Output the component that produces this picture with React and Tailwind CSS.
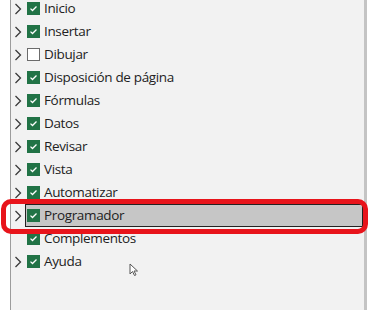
import React from "react";

const items = [
  { label: "Inicio", checked: true, chev: true },
  { label: "Insertar", checked: true, chev: true },
  { label: "Dibujar", checked: false, chev: true },
  { label: "Disposición de página", checked: true, chev: true },
  { label: "Fórmulas", checked: true, chev: true },
  { label: "Datos", checked: true, chev: true },
  { label: "Revisar", checked: true, chev: true },
  { label: "Vista", checked: true, chev: true },
  { label: "Automatizar", checked: true, chev: true },
  { label: "Programador", checked: true, chev: true, sel: true },
  { label: "Complementos", checked: true, chev: false },
  { label: "Ayuda", checked: true, chev: true },
];

function Chevron() {
  return (
    <svg width="8" height="12" viewBox="0 0 8 12" className="shrink-0">
      <path d="M1.5 1 L6.5 6 L1.5 11" fill="none" stroke="#3a3a3a" strokeWidth="1.3" />
    </svg>
  );
}

function Box({ checked }) {
  if (!checked)
    return <div className="w-[13px] h-[13px] bg-white border border-[#6b6b6b] shrink-0" />;
  return (
    <div className="w-[13px] h-[13px] bg-[#217346] shrink-0 flex items-center justify-center">
      <svg width="9" height="7" viewBox="0 0 9 7">
        <path d="M1.5 3.6 L3.5 5.5 L7.5 1.5" fill="none" stroke="white" strokeWidth="1.3" />
      </svg>
    </div>
  );
}

export default function App() {
  return (
    <div
      className="relative w-[371px] h-[313px] bg-white overflow-hidden"
      style={{ fontFamily: '"Open Sans", "Noto Sans", sans-serif' }}
    >
      <div className="ml-[10px] w-[357px] h-full bg-[#f2f2f2] border-l border-[#9c9c9c] border-r-[3px] border-r-[#c4c4c4]">
        <div className="mt-[-3px] flex flex-col">
          {items.map((it) => (
            <div key={it.label} className="h-[23px] flex items-center">
              <div className="w-[14px] pl-[3px] flex items-center">{it.chev && <Chevron />}</div>
              <div
                className={
                  "flex-1 h-full flex items-center pl-[1px] mr-[1px] " +
                  (it.sel ? "bg-[#c6c6c6] border-[1.5px] border-[#222]" : "border-[1.5px] border-transparent")
                }
              >
                <Box checked={it.checked} />
                <span className="ml-[4px] text-[13.5px] tracking-[-0.35px] text-[#222] leading-none">{it.label}</span>
              </div>
            </div>
          ))}
        </div>
      </div>
      <div className="absolute left-[1px] top-[199px] w-[367px] h-[35px] rounded-[10px] border-[5px] border-[#e8141b]" />
      <svg className="absolute left-[129px] top-[263px]" width="10" height="14" viewBox="0 0 10 14">
        <path d="M1 1 L1 11 L3.5 8.5 L5.5 12.5 L7 11.8 L5 8 L8.5 8 Z" fill="white" stroke="#555" strokeWidth="1" />
      </svg>
    </div>
  );
}
